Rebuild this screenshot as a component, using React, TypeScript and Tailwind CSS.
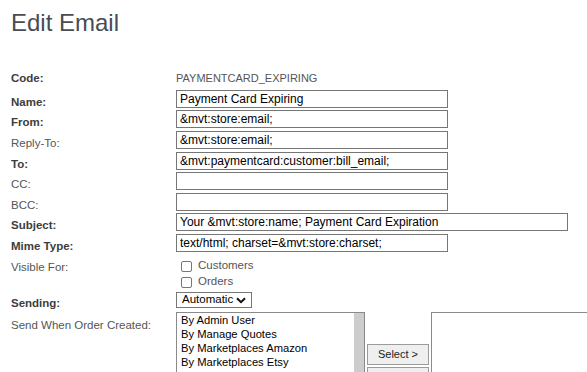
import type { ReactNode } from "react";
import { clsx } from "clsx";

type FieldRowProps = {
  label: string;
  bold?: boolean;
  height: string;
  children: ReactNode;
};

function FieldRow({ label, bold, height, children }: FieldRowProps) {
  return (
    <div className={clsx("flex items-start", height)}>
      <div
        className={clsx(
          "w-[165px] shrink-0 pt-[4px] text-[11.5px] leading-[18px]",
          bold ? "font-bold text-[#3d3d3d]" : "text-[#555]",
        )}
      >
        {label}
      </div>
      <div className="pt-px">{children}</div>
    </div>
  );
}

function TextBox({ value, wide }: { value: string; wide?: boolean }) {
  return (
    <input
      readOnly
      defaultValue={value}
      className={clsx(
        "block h-[18px] border border-[#767676] bg-white px-[3px] text-[12px] leading-[16px] text-black outline-none",
        wide ? "w-[392px]" : "w-[272px]",
      )}
    />
  );
}

function CheckLine({ label }: { label: string }) {
  return (
    <div className="flex h-[16px] items-center">
      <span className="ml-[5px] h-[11px] w-[11px] rounded-[2px] border border-[#767676] bg-white" />
      <span className="ml-[6px] text-[11.5px] text-[#555]">{label}</span>
    </div>
  );
}

const sources = ["By Admin User", "By Manage Quotes", "By Marketplaces Amazon", "By Marketplaces Etsy"];

export default function App() {
  return (
    <div className="h-[372px] w-[587px] overflow-hidden bg-white pl-[11px] font-['Liberation_Sans',Arial,sans-serif]">
      <h1 className="mt-[9px] text-[24px] leading-[28px] text-[#474c55]">Edit Email</h1>

      <div className="mt-[31px]">
        <div className="flex h-[21px] items-center">
          <div className="w-[165px] shrink-0 text-[11.5px] font-bold text-[#3d3d3d]">Code:</div>
          <div className="text-[11px] text-[#555]">PAYMENTCARD_EXPIRING</div>
        </div>

        <FieldRow label="Name:" bold height="h-[20px]">
          <TextBox value="Payment Card Expiring" />
        </FieldRow>
        <FieldRow label="From:" bold height="h-[21px]">
          <TextBox value="&mvt:store:email;" />
        </FieldRow>
        <FieldRow label="Reply-To:" height="h-[21px]">
          <TextBox value="&mvt:store:email;" />
        </FieldRow>
        <FieldRow label="To:" bold height="h-[20px]">
          <TextBox value="&mvt:paymentcard:customer:bill_email;" />
        </FieldRow>
        <FieldRow label="CC:" height="h-[21px]">
          <TextBox value="" />
        </FieldRow>
        <FieldRow label="BCC:" height="h-[20px]">
          <TextBox value="" />
        </FieldRow>
        <FieldRow label="Subject:" bold height="h-[21px]">
          <TextBox value="Your &mvt:store:name; Payment Card Expiration" wide />
        </FieldRow>
        <FieldRow label="Mime Type:" bold height="h-[21px]">
          <TextBox value="text/html; charset=&mvt:store:charset;" />
        </FieldRow>

        {/* visible for */}
        <div className="flex h-[36px] items-start">
          <div className="w-[165px] shrink-0 pt-[4px] text-[11.5px] leading-[18px] text-[#555]">Visible For:</div>
          <div className="pt-[4px]">
            <CheckLine label="Customers" />
            <CheckLine label="Orders" />
          </div>
        </div>

        <div className="flex h-[22px] items-start">
          <div className="w-[165px] shrink-0 pt-[4px] text-[11.5px] font-bold leading-[18px] text-[#3d3d3d]">Sending:</div>
          <div className="pt-[2px]">
            <div className="flex h-[16px] w-[76px] items-center justify-between border border-[#767676] bg-white pl-[5px] pr-[5px] text-[11.5px] text-black">
              <span>Automatic</span>
              <svg width="10" height="7" viewBox="0 0 10 7" fill="none">
                <path d="M1 1.2 5 5.2 9 1.2" stroke="#111" strokeWidth="2" />
              </svg>
            </div>
          </div>
        </div>

        <div className="flex items-start">
          <div className="w-[165px] shrink-0 pt-[4px] text-[11.5px] leading-[18px] text-[#555]">Send When Order Created:</div>
          <div className="flex">
            <div className="flex h-[100px] w-[189px] border border-[#8a8a8a] bg-white">
              <div className="flex-1 overflow-hidden pl-[4px] text-[11.2px] leading-[14px] text-black">
                {sources.map((s) => (
                  <div key={s} className="whitespace-nowrap">{s}</div>
                ))}
              </div>
              <div className="w-[10px] bg-[#cdcdcd]" />
            </div>
            <div className="flex w-[66px] flex-col gap-[2px] pl-[2px] pt-[32px]">
              <button className="h-[21px] w-[62px] border border-[#9b9b9b] bg-[#efefef] text-[11px] text-[#222]">Select &gt;</button>
              <div className="h-[21px] w-[62px] border border-[#9b9b9b] bg-[#efefef]" />
            </div>
            <div className="h-[100px] w-[190px] border border-[#8a8a8a] bg-white" />
          </div>
        </div>
      </div>
    </div>
  );
}
